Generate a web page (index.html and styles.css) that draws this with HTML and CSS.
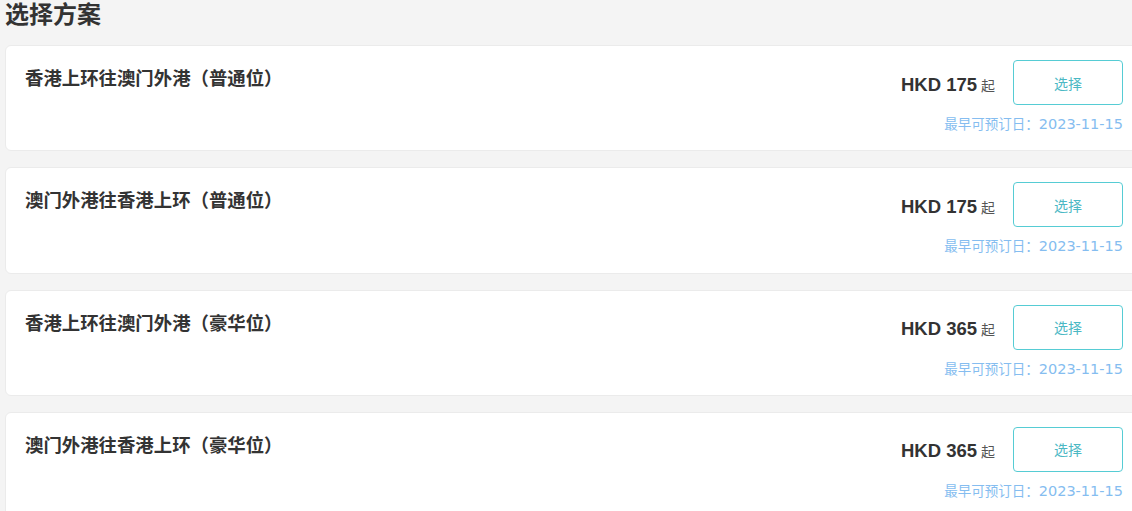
FILE: index.html
```html
<!DOCTYPE html>
<html lang="zh-CN">
<head>
<meta charset="utf-8">
<link rel="stylesheet" href="styles.css">
</head>
<body>
<div class="page">
  <h2 class="page-title">选择方案</h2>
  <div class="plan-list">
    <div class="plan-card">
      <div class="plan-name">香港上环往澳门外港（普通位）</div>
      <div class="plan-side">
        <div class="plan-row">
          <div class="price"><span class="amount">HKD 175</span><span class="from">起</span></div>
          <button class="select-btn">选择</button>
        </div>
        <div class="plan-date">最早可预订日：<span class="date-val">2023-11-15</span></div>
      </div>
    </div>
    <div class="plan-card">
      <div class="plan-name">澳门外港往香港上环（普通位）</div>
      <div class="plan-side">
        <div class="plan-row">
          <div class="price"><span class="amount">HKD 175</span><span class="from">起</span></div>
          <button class="select-btn">选择</button>
        </div>
        <div class="plan-date">最早可预订日：<span class="date-val">2023-11-15</span></div>
      </div>
    </div>
    <div class="plan-card">
      <div class="plan-name">香港上环往澳门外港（豪华位）</div>
      <div class="plan-side">
        <div class="plan-row">
          <div class="price"><span class="amount">HKD 365</span><span class="from">起</span></div>
          <button class="select-btn">选择</button>
        </div>
        <div class="plan-date">最早可预订日：<span class="date-val">2023-11-15</span></div>
      </div>
    </div>
    <div class="plan-card">
      <div class="plan-name">澳门外港往香港上环（豪华位）</div>
      <div class="plan-side">
        <div class="plan-row">
          <div class="price"><span class="amount">HKD 365</span><span class="from">起</span></div>
          <button class="select-btn">选择</button>
        </div>
        <div class="plan-date">最早可预订日：<span class="date-val">2023-11-15</span></div>
      </div>
    </div>
  </div>
</div>
</body>
</html>
```
FILE: styles.css
```css
html, body {
  margin: 0;
  padding: 0;
  overflow: hidden;
  background: #f4f4f4;
}
body {
  font-family: "Noto Sans CJK SC", "Noto Sans", sans-serif;
  color: #333;
}
.page {
  width: 1137px;
  padding-left: 5px;
}
.page-title {
  margin: 0;
  height: 45px;
  font-size: 24px;
  line-height: 26px;
  font-weight: 700;
  color: #333;
}
.plan-list {
  display: flex;
  flex-direction: column;
  gap: 16px;
}
.plan-card {
  background: #fff;
  border: 1px solid #ebebeb;
  border-radius: 6px;
  box-sizing: border-box;
  height: 106.33px;
  padding: 14px 18px 0 19px;
  display: flex;
  justify-content: space-between;
  align-items: flex-start;
}
.plan-name {
  font-size: 18.4px;
  font-weight: 700;
  line-height: 26px;
  margin-top: 4px;
  color: #333;
}
.plan-side {
  display: flex;
  flex-direction: column;
  align-items: flex-end;
}
.plan-row {
  display: flex;
  align-items: center;
}
.price {
  margin-right: 18px;
  margin-top: 4px;
  display: flex;
  align-items: baseline;
}
.amount {
  font-family: "Liberation Sans", Arial, sans-serif;
  font-size: 18.5px;
  font-weight: 700;
  color: #333;
}
.from {
  font-size: 14px;
  color: #555;
  margin-left: 4px;
}
.select-btn {
  width: 110px;
  height: 45px;
  background: #fff;
  border: 1px solid #56ccd4;
  border-radius: 4px;
  color: #4bb8c4;
  font-family: "Noto Sans CJK SC", sans-serif;
  font-size: 14px;
  padding: 0;
}
.plan-date {
  margin-top: 8px;
  font-size: 13.5px;
  line-height: 20px;
  color: #85bdf0;
}
.date-val {
  font-family: "DejaVu Sans", sans-serif;
  font-size: 14.5px;
}
```
